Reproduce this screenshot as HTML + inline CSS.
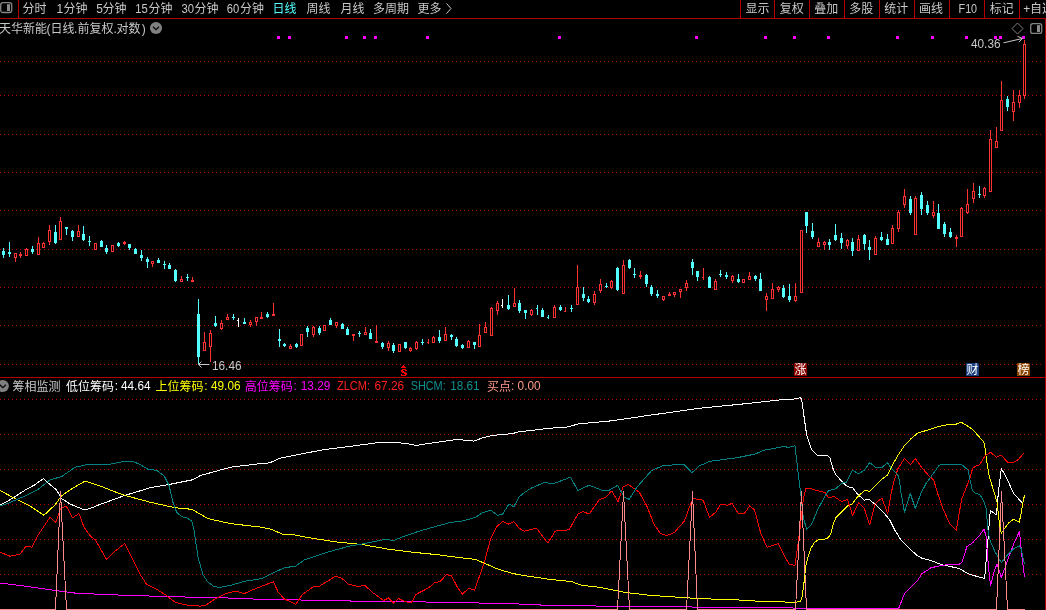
<!DOCTYPE html>
<html><head><meta charset="utf-8"><title>chart</title>
<style>
html,body{margin:0;padding:0;background:#000;overflow:hidden}
svg{display:block;transform:translateZ(0);will-change:transform}
text{font-family:"Liberation Sans","Noto Sans CJK SC",sans-serif}
</style></head><body>
<svg width="1046" height="610" viewBox="0 0 1046 610">
<rect width="1046" height="610" fill="#000"/>
<defs><pattern id="dot" x="0" y="0" width="4" height="1" patternUnits="userSpaceOnUse"><rect x="0" y="0" width="1" height="1" fill="#b80000"/></pattern></defs>
<rect x="0" y="61" width="1042" height="1" fill="url(#dot)"/>
<rect x="0" y="95" width="1042" height="1" fill="url(#dot)"/>
<rect x="0" y="134" width="1042" height="1" fill="url(#dot)"/>
<rect x="0" y="172" width="1042" height="1" fill="url(#dot)"/>
<rect x="0" y="210" width="1042" height="1" fill="url(#dot)"/>
<rect x="0" y="249" width="1042" height="1" fill="url(#dot)"/>
<rect x="0" y="287" width="1042" height="1" fill="url(#dot)"/>
<rect x="0" y="325" width="1042" height="1" fill="url(#dot)"/>
<rect x="0" y="364" width="1042" height="1" fill="url(#dot)"/>
<rect x="0" y="399" width="1042" height="1" fill="url(#dot)"/>
<rect x="0" y="434" width="1042" height="1" fill="url(#dot)"/>
<rect x="0" y="469" width="1042" height="1" fill="url(#dot)"/>
<rect x="0" y="504" width="1042" height="1" fill="url(#dot)"/>
<rect x="0" y="539" width="1042" height="1" fill="url(#dot)"/>
<rect x="0" y="574" width="1042" height="1" fill="url(#dot)"/>
<rect x="0" y="18" width="1046" height="1" fill="#b40000"/>
<rect x="0" y="377" width="1046" height="1" fill="#b40000"/>
<rect x="1045" y="18" width="1" height="592" fill="#b40000"/>
<rect x="18" y="0" width="1" height="18" fill="#b40000"/>
<rect x="740" y="0" width="1" height="18" fill="#b40000"/>
<rect x="774" y="0" width="1" height="18" fill="#b40000"/>
<rect x="809" y="0" width="1" height="18" fill="#b40000"/>
<rect x="844" y="0" width="1" height="18" fill="#b40000"/>
<rect x="879" y="0" width="1" height="18" fill="#b40000"/>
<rect x="914" y="0" width="1" height="18" fill="#b40000"/>
<rect x="949" y="0" width="1" height="18" fill="#b40000"/>
<rect x="984" y="0" width="1" height="18" fill="#b40000"/>
<rect x="1019" y="0" width="1" height="18" fill="#b40000"/>
<rect x="0.7" y="2.7" width="11" height="9.8" rx="2.2" ry="2.2" fill="none" stroke="#858585" stroke-width="1.3"/>
<rect x="7" y="4.2" width="3" height="6.8" fill="#8c8c8c"/>
<text x="22.50" y="12.90" fill="#c8c8c8" font-size="12" textLength="24" lengthAdjust="spacingAndGlyphs" text-anchor="start">分时</text>
<text x="56.50" y="12.70" fill="#c8c8c8" font-size="12" text-anchor="start">1</text>
<text x="63.50" y="12.90" fill="#c8c8c8" font-size="12" textLength="24" lengthAdjust="spacingAndGlyphs" text-anchor="start">分钟</text>
<text x="96.30" y="12.70" fill="#c8c8c8" font-size="12" text-anchor="start">5</text>
<text x="102.50" y="12.90" fill="#c8c8c8" font-size="12" textLength="24" lengthAdjust="spacingAndGlyphs" text-anchor="start">分钟</text>
<text x="135.30" y="12.70" fill="#c8c8c8" font-size="12" textLength="12.5" lengthAdjust="spacingAndGlyphs" text-anchor="start">15</text>
<text x="148.50" y="12.90" fill="#c8c8c8" font-size="12" textLength="24" lengthAdjust="spacingAndGlyphs" text-anchor="start">分钟</text>
<text x="181.50" y="12.70" fill="#c8c8c8" font-size="12" textLength="12.5" lengthAdjust="spacingAndGlyphs" text-anchor="start">30</text>
<text x="194.50" y="12.90" fill="#c8c8c8" font-size="12" textLength="24" lengthAdjust="spacingAndGlyphs" text-anchor="start">分钟</text>
<text x="226.80" y="12.70" fill="#c8c8c8" font-size="12" textLength="12.5" lengthAdjust="spacingAndGlyphs" text-anchor="start">60</text>
<text x="240.00" y="12.90" fill="#c8c8c8" font-size="12" textLength="24" lengthAdjust="spacingAndGlyphs" text-anchor="start">分钟</text>
<text x="272.50" y="12.90" fill="#54ffff" font-size="12" textLength="24" lengthAdjust="spacingAndGlyphs" text-anchor="start">日线</text>
<text x="306.50" y="12.90" fill="#c8c8c8" font-size="12" textLength="24" lengthAdjust="spacingAndGlyphs" text-anchor="start">周线</text>
<text x="340.50" y="12.90" fill="#c8c8c8" font-size="12" textLength="24" lengthAdjust="spacingAndGlyphs" text-anchor="start">月线</text>
<text x="373.00" y="12.90" fill="#c8c8c8" font-size="12" textLength="36" lengthAdjust="spacingAndGlyphs" text-anchor="start">多周期</text>
<text x="417.50" y="12.90" fill="#c8c8c8" font-size="12" textLength="24" lengthAdjust="spacingAndGlyphs" text-anchor="start">更多</text>
<path d="M446.5 3.5 L451 8.5 L446.5 13.5" fill="none" stroke="#c8c8c8" stroke-width="1"/>
<text x="745.50" y="12.90" fill="#c8c8c8" font-size="12" textLength="24" lengthAdjust="spacingAndGlyphs" text-anchor="start">显示</text>
<text x="779.80" y="12.90" fill="#c8c8c8" font-size="12" textLength="24" lengthAdjust="spacingAndGlyphs" text-anchor="start">复权</text>
<text x="814.30" y="12.90" fill="#c8c8c8" font-size="12" textLength="24" lengthAdjust="spacingAndGlyphs" text-anchor="start">叠加</text>
<text x="849.20" y="12.90" fill="#c8c8c8" font-size="12" textLength="24" lengthAdjust="spacingAndGlyphs" text-anchor="start">多股</text>
<text x="884.20" y="12.90" fill="#c8c8c8" font-size="12" textLength="24" lengthAdjust="spacingAndGlyphs" text-anchor="start">统计</text>
<text x="919.00" y="12.90" fill="#c8c8c8" font-size="12" textLength="24" lengthAdjust="spacingAndGlyphs" text-anchor="start">画线</text>
<text x="958.60" y="12.70" fill="#c8c8c8" font-size="12" textLength="18.5" lengthAdjust="spacingAndGlyphs" text-anchor="start">F10</text>
<text x="989.80" y="12.90" fill="#c8c8c8" font-size="12" textLength="24" lengthAdjust="spacingAndGlyphs" text-anchor="start">标记</text>
<text x="1023.30" y="12.70" fill="#c8c8c8" font-size="12" text-anchor="start">+</text>
<text x="1030.00" y="12.90" fill="#c8c8c8" font-size="12" textLength="24" lengthAdjust="spacingAndGlyphs" text-anchor="start">自选</text>
<text x="-1.00" y="33.10" fill="#c8c8c8" font-size="12" textLength="48" lengthAdjust="spacingAndGlyphs" text-anchor="start">天华新能</text>
<text x="46.60" y="32.90" fill="#c8c8c8" font-size="12" text-anchor="start">(</text>
<text x="50.50" y="33.10" fill="#c8c8c8" font-size="12" textLength="24" lengthAdjust="spacingAndGlyphs" text-anchor="start">日线</text>
<text x="74.00" y="32.90" fill="#c8c8c8" font-size="12" text-anchor="start">.</text>
<text x="77.50" y="33.10" fill="#c8c8c8" font-size="12" textLength="36" lengthAdjust="spacingAndGlyphs" text-anchor="start">前复权</text>
<text x="113.60" y="32.90" fill="#c8c8c8" font-size="12" text-anchor="start">.</text>
<text x="116.50" y="33.10" fill="#c8c8c8" font-size="12" textLength="24" lengthAdjust="spacingAndGlyphs" text-anchor="start">对数</text>
<text x="141.80" y="32.90" fill="#c8c8c8" font-size="12" text-anchor="start">)</text>
<circle cx="156" cy="28" r="6.1" fill="#808080"/>
<path d="M153 26.7 L156 29.6 L159 26.7" fill="none" stroke="#080808" stroke-width="1.3"/>
<path d="M1017.5 23 L1023 28.5 L1017.5 34 L1012 28.5 Z" fill="none" stroke="#808080" stroke-width="1"/>
<rect x="1030.7" y="23.6" width="11" height="9.8" rx="2.2" ry="2.2" fill="none" stroke="#858585" stroke-width="1.3"/>
<rect x="1037" y="25.2" width="3" height="6.8" fill="#8c8c8c"/>
<rect x="277" y="36" width="3" height="3" fill="#ff00ff"/>
<rect x="288" y="36" width="3" height="3" fill="#ff00ff"/>
<rect x="345" y="36" width="3" height="3" fill="#ff00ff"/>
<rect x="363" y="36" width="3" height="3" fill="#ff00ff"/>
<rect x="374" y="36" width="3" height="3" fill="#ff00ff"/>
<rect x="426" y="36" width="3" height="3" fill="#ff00ff"/>
<rect x="558" y="36" width="3" height="3" fill="#ff00ff"/>
<rect x="695" y="36" width="3" height="3" fill="#ff00ff"/>
<rect x="764" y="36" width="3" height="3" fill="#ff00ff"/>
<rect x="793" y="36" width="3" height="3" fill="#ff00ff"/>
<rect x="827" y="36" width="3" height="3" fill="#ff00ff"/>
<rect x="896" y="36" width="3" height="3" fill="#ff00ff"/>
<rect x="931" y="36" width="3" height="3" fill="#ff00ff"/>
<rect x="965" y="36" width="3" height="3" fill="#ff00ff"/>
<rect x="994" y="36" width="3" height="3" fill="#ff00ff"/>
<rect x="999" y="36" width="3" height="3" fill="#ff00ff"/>
<rect x="1022" y="36" width="3" height="3" fill="#ff00ff"/>
<g shape-rendering="crispEdges">
<rect x="3" y="248" width="1" height="10" fill="#54ffff"/>
<rect x="2" y="251" width="3" height="4" fill="#54ffff"/>
<rect x="9" y="242" width="1" height="15" fill="#54ffff"/>
<rect x="8" y="252" width="3" height="2" fill="#54ffff"/>
<rect x="15" y="258" width="1" height="4" fill="#ff3232"/>
<rect x="14" y="253" width="3" height="5" fill="#ff3232"/>
<rect x="15" y="254" width="1" height="3" fill="#000"/>
<rect x="20" y="252" width="1" height="6" fill="#ff3232"/>
<rect x="19" y="254" width="3" height="2" fill="#ff3232"/>
<rect x="26" y="248" width="1" height="1" fill="#ff3232"/>
<rect x="25" y="249" width="3" height="7" fill="#ff3232"/>
<rect x="26" y="250" width="1" height="5" fill="#000"/>
<rect x="32" y="246" width="1" height="8" fill="#54ffff"/>
<rect x="31" y="249" width="3" height="3" fill="#54ffff"/>
<rect x="38" y="237" width="1" height="6" fill="#ff3232"/>
<rect x="37" y="243" width="3" height="12" fill="#ff3232"/>
<rect x="38" y="244" width="1" height="10" fill="#000"/>
<rect x="43" y="242" width="1" height="1" fill="#ff3232"/>
<rect x="42" y="243" width="3" height="5" fill="#ff3232"/>
<rect x="43" y="244" width="1" height="3" fill="#000"/>
<rect x="49" y="225" width="1" height="5" fill="#ff3232"/>
<rect x="49" y="242" width="1" height="3" fill="#ff3232"/>
<rect x="48" y="230" width="3" height="12" fill="#ff3232"/>
<rect x="49" y="231" width="1" height="10" fill="#000"/>
<rect x="55" y="225" width="1" height="19" fill="#54ffff"/>
<rect x="54" y="232" width="3" height="11" fill="#54ffff"/>
<rect x="60" y="217" width="1" height="4" fill="#ff3232"/>
<rect x="59" y="221" width="3" height="19" fill="#ff3232"/>
<rect x="60" y="222" width="1" height="17" fill="#000"/>
<rect x="66" y="227" width="1" height="8" fill="#54ffff"/>
<rect x="65" y="227" width="3" height="2" fill="#54ffff"/>
<rect x="72" y="230" width="1" height="11" fill="#54ffff"/>
<rect x="71" y="231" width="3" height="6" fill="#54ffff"/>
<rect x="78" y="225" width="1" height="6" fill="#ff3232"/>
<rect x="77" y="231" width="3" height="6" fill="#ff3232"/>
<rect x="78" y="232" width="1" height="4" fill="#000"/>
<rect x="83" y="226" width="1" height="15" fill="#54ffff"/>
<rect x="82" y="234" width="3" height="6" fill="#54ffff"/>
<rect x="89" y="236" width="1" height="10" fill="#54ffff"/>
<rect x="88" y="241" width="3" height="1" fill="#54ffff"/>
<rect x="94" y="243" width="3" height="7" fill="#ff3232"/>
<rect x="95" y="244" width="1" height="5" fill="#000"/>
<rect x="101" y="240" width="1" height="7" fill="#54ffff"/>
<rect x="100" y="241" width="3" height="6" fill="#54ffff"/>
<rect x="106" y="245" width="1" height="9" fill="#54ffff"/>
<rect x="105" y="248" width="3" height="4" fill="#54ffff"/>
<rect x="111" y="245" width="3" height="7" fill="#ff3232"/>
<rect x="112" y="246" width="1" height="5" fill="#000"/>
<rect x="118" y="242" width="1" height="5" fill="#54ffff"/>
<rect x="117" y="243" width="3" height="3" fill="#54ffff"/>
<rect x="124" y="241" width="1" height="4" fill="#ff3232"/>
<rect x="123" y="242" width="3" height="2" fill="#ff3232"/>
<rect x="129" y="244" width="1" height="6" fill="#54ffff"/>
<rect x="128" y="244" width="3" height="4" fill="#54ffff"/>
<rect x="135" y="248" width="1" height="6" fill="#54ffff"/>
<rect x="134" y="249" width="3" height="5" fill="#54ffff"/>
<rect x="141" y="250" width="1" height="11" fill="#54ffff"/>
<rect x="140" y="255" width="3" height="3" fill="#54ffff"/>
<rect x="147" y="257" width="1" height="11" fill="#54ffff"/>
<rect x="146" y="259" width="3" height="3" fill="#54ffff"/>
<rect x="152" y="264" width="1" height="3" fill="#ff3232"/>
<rect x="151" y="261" width="3" height="3" fill="#ff3232"/>
<rect x="152" y="262" width="1" height="1" fill="#000"/>
<rect x="158" y="258" width="1" height="5" fill="#54ffff"/>
<rect x="157" y="260" width="3" height="3" fill="#54ffff"/>
<rect x="164" y="261" width="1" height="8" fill="#54ffff"/>
<rect x="163" y="264" width="3" height="1" fill="#54ffff"/>
<rect x="169" y="263" width="1" height="6" fill="#54ffff"/>
<rect x="168" y="265" width="3" height="4" fill="#54ffff"/>
<rect x="175" y="269" width="1" height="13" fill="#54ffff"/>
<rect x="174" y="270" width="3" height="11" fill="#54ffff"/>
<rect x="181" y="276" width="1" height="3" fill="#ff3232"/>
<rect x="180" y="279" width="3" height="3" fill="#ff3232"/>
<rect x="181" y="280" width="1" height="1" fill="#000"/>
<rect x="187" y="274" width="1" height="7" fill="#54ffff"/>
<rect x="186" y="277" width="3" height="1" fill="#54ffff"/>
<rect x="192" y="277" width="1" height="5" fill="#ff3232"/>
<rect x="191" y="280" width="3" height="2" fill="#ff3232"/>
<rect x="198" y="299" width="1" height="65" fill="#54ffff"/>
<rect x="197" y="314" width="3" height="43" fill="#54ffff"/>
<rect x="204" y="332" width="1" height="10" fill="#ff3232"/>
<rect x="203" y="342" width="3" height="9" fill="#ff3232"/>
<rect x="204" y="343" width="1" height="7" fill="#000"/>
<rect x="210" y="330" width="1" height="3" fill="#ff3232"/>
<rect x="210" y="347" width="1" height="15" fill="#ff3232"/>
<rect x="209" y="333" width="3" height="14" fill="#ff3232"/>
<rect x="210" y="334" width="1" height="12" fill="#000"/>
<rect x="215" y="316" width="1" height="11" fill="#54ffff"/>
<rect x="214" y="323" width="3" height="3" fill="#54ffff"/>
<rect x="221" y="320" width="1" height="3" fill="#ff3232"/>
<rect x="221" y="329" width="1" height="1" fill="#ff3232"/>
<rect x="220" y="323" width="3" height="6" fill="#ff3232"/>
<rect x="221" y="324" width="1" height="4" fill="#000"/>
<rect x="227" y="314" width="1" height="3" fill="#ff3232"/>
<rect x="226" y="317" width="3" height="3" fill="#ff3232"/>
<rect x="227" y="318" width="1" height="1" fill="#000"/>
<rect x="233" y="314" width="1" height="6" fill="#54ffff"/>
<rect x="232" y="317" width="3" height="1" fill="#54ffff"/>
<rect x="238" y="318" width="1" height="9" fill="#ffffff"/>
<rect x="237" y="320" width="1" height="1" fill="#ffffff"/>
<rect x="244" y="318" width="1" height="6" fill="#54ffff"/>
<rect x="243" y="322" width="3" height="2" fill="#54ffff"/>
<rect x="250" y="320" width="1" height="2" fill="#ff3232"/>
<rect x="250" y="325" width="1" height="2" fill="#ff3232"/>
<rect x="249" y="322" width="3" height="3" fill="#ff3232"/>
<rect x="250" y="323" width="1" height="1" fill="#000"/>
<rect x="256" y="322" width="1" height="4" fill="#ff3232"/>
<rect x="255" y="317" width="3" height="5" fill="#ff3232"/>
<rect x="256" y="318" width="1" height="3" fill="#000"/>
<rect x="261" y="312" width="1" height="7" fill="#ff3232"/>
<rect x="260" y="317" width="3" height="2" fill="#ff3232"/>
<rect x="267" y="312" width="1" height="6" fill="#54ffff"/>
<rect x="266" y="314" width="3" height="3" fill="#54ffff"/>
<rect x="273" y="303" width="1" height="13" fill="#ff3232"/>
<rect x="272" y="314" width="3" height="2" fill="#ff3232"/>
<rect x="279" y="329" width="1" height="18" fill="#54ffff"/>
<rect x="278" y="339" width="3" height="2" fill="#54ffff"/>
<rect x="284" y="343" width="1" height="4" fill="#54ffff"/>
<rect x="283" y="344" width="3" height="2" fill="#54ffff"/>
<rect x="290" y="344" width="1" height="2" fill="#ff3232"/>
<rect x="289" y="346" width="3" height="3" fill="#ff3232"/>
<rect x="290" y="347" width="1" height="1" fill="#000"/>
<rect x="296" y="343" width="1" height="5" fill="#54ffff"/>
<rect x="295" y="344" width="3" height="3" fill="#54ffff"/>
<rect x="300" y="334" width="3" height="12" fill="#ff3232"/>
<rect x="301" y="335" width="1" height="10" fill="#000"/>
<rect x="307" y="326" width="1" height="11" fill="#54ffff"/>
<rect x="306" y="328" width="3" height="4" fill="#54ffff"/>
<rect x="313" y="326" width="1" height="1" fill="#ff3232"/>
<rect x="313" y="335" width="1" height="2" fill="#ff3232"/>
<rect x="312" y="327" width="3" height="8" fill="#ff3232"/>
<rect x="313" y="328" width="1" height="6" fill="#000"/>
<rect x="319" y="326" width="1" height="9" fill="#54ffff"/>
<rect x="318" y="328" width="3" height="5" fill="#54ffff"/>
<rect x="323" y="325" width="3" height="6" fill="#ff3232"/>
<rect x="324" y="326" width="1" height="4" fill="#000"/>
<rect x="330" y="318" width="1" height="7" fill="#54ffff"/>
<rect x="329" y="320" width="3" height="5" fill="#54ffff"/>
<rect x="336" y="326" width="1" height="2" fill="#ff3232"/>
<rect x="335" y="322" width="3" height="4" fill="#ff3232"/>
<rect x="336" y="323" width="1" height="2" fill="#000"/>
<rect x="342" y="323" width="1" height="6" fill="#54ffff"/>
<rect x="341" y="324" width="3" height="5" fill="#54ffff"/>
<rect x="347" y="327" width="1" height="8" fill="#54ffff"/>
<rect x="346" y="329" width="3" height="6" fill="#54ffff"/>
<rect x="353" y="334" width="1" height="7" fill="#ff3232"/>
<rect x="352" y="334" width="3" height="2" fill="#ff3232"/>
<rect x="359" y="331" width="1" height="6" fill="#54ffff"/>
<rect x="358" y="333" width="3" height="1" fill="#54ffff"/>
<rect x="365" y="327" width="1" height="5" fill="#ff3232"/>
<rect x="364" y="332" width="3" height="3" fill="#ff3232"/>
<rect x="365" y="333" width="1" height="1" fill="#000"/>
<rect x="370" y="329" width="1" height="10" fill="#54ffff"/>
<rect x="369" y="333" width="3" height="6" fill="#54ffff"/>
<rect x="376" y="325" width="1" height="18" fill="#ff3232"/>
<rect x="375" y="341" width="3" height="2" fill="#ff3232"/>
<rect x="382" y="342" width="1" height="7" fill="#54ffff"/>
<rect x="381" y="343" width="3" height="4" fill="#54ffff"/>
<rect x="388" y="341" width="1" height="2" fill="#ff3232"/>
<rect x="388" y="348" width="1" height="3" fill="#ff3232"/>
<rect x="387" y="343" width="3" height="5" fill="#ff3232"/>
<rect x="388" y="344" width="1" height="3" fill="#000"/>
<rect x="393" y="343" width="1" height="10" fill="#54ffff"/>
<rect x="392" y="345" width="3" height="6" fill="#54ffff"/>
<rect x="398" y="344" width="3" height="8" fill="#ff3232"/>
<rect x="399" y="345" width="1" height="6" fill="#000"/>
<rect x="405" y="342" width="1" height="7" fill="#54ffff"/>
<rect x="404" y="342" width="3" height="6" fill="#54ffff"/>
<rect x="410" y="347" width="1" height="1" fill="#ff3232"/>
<rect x="410" y="351" width="1" height="1" fill="#ff3232"/>
<rect x="409" y="348" width="3" height="3" fill="#ff3232"/>
<rect x="410" y="349" width="1" height="1" fill="#000"/>
<rect x="416" y="341" width="1" height="1" fill="#ff3232"/>
<rect x="416" y="349" width="1" height="1" fill="#ff3232"/>
<rect x="415" y="342" width="3" height="7" fill="#ff3232"/>
<rect x="416" y="343" width="1" height="5" fill="#000"/>
<rect x="422" y="339" width="1" height="6" fill="#54ffff"/>
<rect x="421" y="342" width="3" height="1" fill="#54ffff"/>
<rect x="428" y="339" width="1" height="5" fill="#ff3232"/>
<rect x="427" y="342" width="1" height="1" fill="#ff3232"/>
<rect x="433" y="336" width="1" height="1" fill="#ff3232"/>
<rect x="432" y="337" width="3" height="6" fill="#ff3232"/>
<rect x="433" y="338" width="1" height="4" fill="#000"/>
<rect x="439" y="330" width="1" height="13" fill="#54ffff"/>
<rect x="438" y="337" width="3" height="4" fill="#54ffff"/>
<rect x="445" y="327" width="1" height="7" fill="#ff3232"/>
<rect x="444" y="334" width="3" height="7" fill="#ff3232"/>
<rect x="445" y="335" width="1" height="5" fill="#000"/>
<rect x="451" y="334" width="1" height="6" fill="#54ffff"/>
<rect x="450" y="335" width="3" height="2" fill="#54ffff"/>
<rect x="456" y="337" width="1" height="10" fill="#54ffff"/>
<rect x="455" y="339" width="3" height="7" fill="#54ffff"/>
<rect x="462" y="344" width="1" height="5" fill="#54ffff"/>
<rect x="461" y="345" width="3" height="3" fill="#54ffff"/>
<rect x="468" y="340" width="1" height="1" fill="#ff3232"/>
<rect x="467" y="341" width="3" height="7" fill="#ff3232"/>
<rect x="468" y="342" width="1" height="5" fill="#000"/>
<rect x="474" y="342" width="1" height="7" fill="#54ffff"/>
<rect x="473" y="342" width="3" height="3" fill="#54ffff"/>
<rect x="479" y="324" width="1" height="11" fill="#ff3232"/>
<rect x="478" y="335" width="3" height="12" fill="#ff3232"/>
<rect x="479" y="336" width="1" height="10" fill="#000"/>
<rect x="485" y="322" width="1" height="5" fill="#ff3232"/>
<rect x="484" y="327" width="3" height="6" fill="#ff3232"/>
<rect x="485" y="328" width="1" height="4" fill="#000"/>
<rect x="491" y="307" width="1" height="1" fill="#ff3232"/>
<rect x="490" y="308" width="3" height="28" fill="#ff3232"/>
<rect x="491" y="309" width="1" height="26" fill="#000"/>
<rect x="497" y="301" width="1" height="2" fill="#ff3232"/>
<rect x="497" y="311" width="1" height="4" fill="#ff3232"/>
<rect x="496" y="303" width="3" height="8" fill="#ff3232"/>
<rect x="497" y="304" width="1" height="6" fill="#000"/>
<rect x="502" y="299" width="1" height="9" fill="#ffffff"/>
<rect x="501" y="305" width="1" height="1" fill="#ffffff"/>
<rect x="508" y="295" width="1" height="15" fill="#54ffff"/>
<rect x="507" y="305" width="3" height="4" fill="#54ffff"/>
<rect x="514" y="288" width="1" height="15" fill="#ff3232"/>
<rect x="513" y="303" width="3" height="4" fill="#ff3232"/>
<rect x="514" y="304" width="1" height="2" fill="#000"/>
<rect x="519" y="300" width="1" height="13" fill="#54ffff"/>
<rect x="518" y="303" width="3" height="8" fill="#54ffff"/>
<rect x="525" y="310" width="1" height="9" fill="#54ffff"/>
<rect x="524" y="310" width="3" height="3" fill="#54ffff"/>
<rect x="531" y="309" width="1" height="1" fill="#ff3232"/>
<rect x="531" y="315" width="1" height="1" fill="#ff3232"/>
<rect x="530" y="310" width="3" height="5" fill="#ff3232"/>
<rect x="531" y="311" width="1" height="3" fill="#000"/>
<rect x="537" y="305" width="1" height="10" fill="#54ffff"/>
<rect x="536" y="308" width="1" height="1" fill="#54ffff"/>
<rect x="542" y="308" width="1" height="9" fill="#54ffff"/>
<rect x="541" y="310" width="3" height="7" fill="#54ffff"/>
<rect x="548" y="315" width="1" height="4" fill="#54ffff"/>
<rect x="547" y="317" width="1" height="1" fill="#54ffff"/>
<rect x="554" y="305" width="1" height="2" fill="#ff3232"/>
<rect x="553" y="307" width="3" height="11" fill="#ff3232"/>
<rect x="554" y="308" width="1" height="9" fill="#000"/>
<rect x="560" y="305" width="1" height="6" fill="#54ffff"/>
<rect x="559" y="307" width="3" height="3" fill="#54ffff"/>
<rect x="565" y="307" width="1" height="5" fill="#ff3232"/>
<rect x="564" y="311" width="1" height="1" fill="#ff3232"/>
<rect x="571" y="305" width="1" height="7" fill="#54ffff"/>
<rect x="570" y="308" width="3" height="1" fill="#54ffff"/>
<rect x="577" y="265" width="1" height="22" fill="#ff3232"/>
<rect x="576" y="287" width="3" height="18" fill="#ff3232"/>
<rect x="577" y="288" width="1" height="16" fill="#000"/>
<rect x="583" y="287" width="1" height="14" fill="#54ffff"/>
<rect x="582" y="294" width="3" height="4" fill="#54ffff"/>
<rect x="588" y="296" width="1" height="7" fill="#54ffff"/>
<rect x="587" y="299" width="3" height="3" fill="#54ffff"/>
<rect x="594" y="291" width="1" height="3" fill="#ff3232"/>
<rect x="594" y="303" width="1" height="2" fill="#ff3232"/>
<rect x="593" y="294" width="3" height="9" fill="#ff3232"/>
<rect x="594" y="295" width="1" height="7" fill="#000"/>
<rect x="600" y="279" width="1" height="5" fill="#ff3232"/>
<rect x="600" y="291" width="1" height="2" fill="#ff3232"/>
<rect x="599" y="284" width="3" height="7" fill="#ff3232"/>
<rect x="600" y="285" width="1" height="5" fill="#000"/>
<rect x="606" y="283" width="1" height="5" fill="#54ffff"/>
<rect x="605" y="286" width="3" height="1" fill="#54ffff"/>
<rect x="611" y="280" width="1" height="1" fill="#ff3232"/>
<rect x="611" y="288" width="1" height="1" fill="#ff3232"/>
<rect x="610" y="281" width="3" height="7" fill="#ff3232"/>
<rect x="611" y="282" width="1" height="5" fill="#000"/>
<rect x="617" y="267" width="1" height="24" fill="#54ffff"/>
<rect x="616" y="268" width="3" height="22" fill="#54ffff"/>
<rect x="623" y="260" width="1" height="5" fill="#ff3232"/>
<rect x="622" y="265" width="3" height="29" fill="#ff3232"/>
<rect x="623" y="266" width="1" height="27" fill="#000"/>
<rect x="629" y="259" width="1" height="10" fill="#54ffff"/>
<rect x="628" y="260" width="3" height="8" fill="#54ffff"/>
<rect x="634" y="268" width="1" height="10" fill="#54ffff"/>
<rect x="633" y="274" width="3" height="1" fill="#54ffff"/>
<rect x="640" y="271" width="1" height="8" fill="#ff3232"/>
<rect x="639" y="275" width="3" height="2" fill="#ff3232"/>
<rect x="646" y="274" width="1" height="13" fill="#54ffff"/>
<rect x="645" y="275" width="3" height="9" fill="#54ffff"/>
<rect x="651" y="285" width="1" height="11" fill="#54ffff"/>
<rect x="650" y="287" width="3" height="7" fill="#54ffff"/>
<rect x="657" y="290" width="1" height="8" fill="#54ffff"/>
<rect x="656" y="294" width="3" height="2" fill="#54ffff"/>
<rect x="663" y="300" width="1" height="1" fill="#ff3232"/>
<rect x="662" y="296" width="3" height="4" fill="#ff3232"/>
<rect x="663" y="297" width="1" height="2" fill="#000"/>
<rect x="669" y="292" width="1" height="4" fill="#ff3232"/>
<rect x="668" y="294" width="3" height="2" fill="#ff3232"/>
<rect x="674" y="295" width="1" height="2" fill="#ff3232"/>
<rect x="673" y="292" width="3" height="3" fill="#ff3232"/>
<rect x="674" y="293" width="1" height="1" fill="#000"/>
<rect x="680" y="292" width="1" height="6" fill="#ff3232"/>
<rect x="679" y="289" width="3" height="3" fill="#ff3232"/>
<rect x="680" y="290" width="1" height="1" fill="#000"/>
<rect x="686" y="280" width="1" height="3" fill="#ff3232"/>
<rect x="686" y="288" width="1" height="3" fill="#ff3232"/>
<rect x="685" y="283" width="3" height="5" fill="#ff3232"/>
<rect x="686" y="284" width="1" height="3" fill="#000"/>
<rect x="692" y="259" width="1" height="16" fill="#54ffff"/>
<rect x="691" y="262" width="3" height="6" fill="#54ffff"/>
<rect x="697" y="271" width="1" height="10" fill="#54ffff"/>
<rect x="696" y="271" width="3" height="6" fill="#54ffff"/>
<rect x="703" y="268" width="1" height="12" fill="#ff3232"/>
<rect x="702" y="277" width="1" height="1" fill="#ff3232"/>
<rect x="709" y="276" width="1" height="12" fill="#54ffff"/>
<rect x="708" y="277" width="3" height="11" fill="#54ffff"/>
<rect x="715" y="279" width="1" height="2" fill="#ff3232"/>
<rect x="714" y="281" width="3" height="9" fill="#ff3232"/>
<rect x="715" y="282" width="1" height="7" fill="#000"/>
<rect x="720" y="270" width="1" height="7" fill="#54ffff"/>
<rect x="719" y="274" width="3" height="1" fill="#54ffff"/>
<rect x="726" y="272" width="1" height="7" fill="#54ffff"/>
<rect x="725" y="275" width="3" height="2" fill="#54ffff"/>
<rect x="732" y="275" width="1" height="1" fill="#ff3232"/>
<rect x="732" y="281" width="1" height="2" fill="#ff3232"/>
<rect x="731" y="276" width="3" height="5" fill="#ff3232"/>
<rect x="732" y="277" width="1" height="3" fill="#000"/>
<rect x="738" y="274" width="1" height="9" fill="#54ffff"/>
<rect x="737" y="279" width="3" height="3" fill="#54ffff"/>
<rect x="742" y="279" width="3" height="4" fill="#ff3232"/>
<rect x="743" y="280" width="1" height="2" fill="#000"/>
<rect x="749" y="272" width="1" height="4" fill="#ff3232"/>
<rect x="748" y="276" width="3" height="4" fill="#ff3232"/>
<rect x="749" y="277" width="1" height="2" fill="#000"/>
<rect x="755" y="275" width="1" height="6" fill="#54ffff"/>
<rect x="754" y="276" width="3" height="3" fill="#54ffff"/>
<rect x="760" y="273" width="1" height="18" fill="#54ffff"/>
<rect x="759" y="279" width="3" height="12" fill="#54ffff"/>
<rect x="766" y="293" width="1" height="3" fill="#ff3232"/>
<rect x="766" y="300" width="1" height="11" fill="#ff3232"/>
<rect x="765" y="296" width="3" height="4" fill="#ff3232"/>
<rect x="766" y="297" width="1" height="2" fill="#000"/>
<rect x="772" y="283" width="1" height="6" fill="#ff3232"/>
<rect x="771" y="289" width="3" height="10" fill="#ff3232"/>
<rect x="772" y="290" width="1" height="8" fill="#000"/>
<rect x="778" y="286" width="1" height="1" fill="#ff3232"/>
<rect x="778" y="290" width="1" height="2" fill="#ff3232"/>
<rect x="777" y="287" width="3" height="3" fill="#ff3232"/>
<rect x="778" y="288" width="1" height="1" fill="#000"/>
<rect x="783" y="285" width="1" height="13" fill="#54ffff"/>
<rect x="782" y="288" width="3" height="9" fill="#54ffff"/>
<rect x="789" y="284" width="1" height="18" fill="#54ffff"/>
<rect x="788" y="296" width="3" height="4" fill="#54ffff"/>
<rect x="795" y="283" width="1" height="13" fill="#ff3232"/>
<rect x="795" y="301" width="1" height="1" fill="#ff3232"/>
<rect x="794" y="296" width="3" height="5" fill="#ff3232"/>
<rect x="795" y="297" width="1" height="3" fill="#000"/>
<rect x="800" y="230" width="3" height="63" fill="#ff3232"/>
<rect x="801" y="231" width="1" height="61" fill="#000"/>
<rect x="806" y="212" width="1" height="21" fill="#54ffff"/>
<rect x="805" y="212" width="3" height="14" fill="#54ffff"/>
<rect x="812" y="223" width="1" height="16" fill="#54ffff"/>
<rect x="811" y="231" width="3" height="6" fill="#54ffff"/>
<rect x="818" y="238" width="1" height="4" fill="#ff3232"/>
<rect x="817" y="242" width="3" height="5" fill="#ff3232"/>
<rect x="818" y="243" width="1" height="3" fill="#000"/>
<rect x="824" y="241" width="1" height="1" fill="#ff3232"/>
<rect x="824" y="245" width="1" height="5" fill="#ff3232"/>
<rect x="823" y="242" width="3" height="3" fill="#ff3232"/>
<rect x="824" y="243" width="1" height="1" fill="#000"/>
<rect x="829" y="239" width="1" height="11" fill="#54ffff"/>
<rect x="828" y="242" width="3" height="3" fill="#54ffff"/>
<rect x="835" y="224" width="1" height="17" fill="#54ffff"/>
<rect x="834" y="235" width="3" height="5" fill="#54ffff"/>
<rect x="841" y="233" width="1" height="16" fill="#54ffff"/>
<rect x="840" y="238" width="3" height="5" fill="#54ffff"/>
<rect x="847" y="239" width="1" height="1" fill="#ff3232"/>
<rect x="847" y="246" width="1" height="3" fill="#ff3232"/>
<rect x="846" y="240" width="3" height="6" fill="#ff3232"/>
<rect x="847" y="241" width="1" height="4" fill="#000"/>
<rect x="852" y="238" width="1" height="18" fill="#54ffff"/>
<rect x="851" y="242" width="3" height="9" fill="#54ffff"/>
<rect x="858" y="235" width="1" height="4" fill="#ff3232"/>
<rect x="857" y="239" width="3" height="12" fill="#ff3232"/>
<rect x="858" y="240" width="1" height="10" fill="#000"/>
<rect x="864" y="234" width="1" height="16" fill="#54ffff"/>
<rect x="863" y="235" width="3" height="9" fill="#54ffff"/>
<rect x="869" y="240" width="1" height="20" fill="#54ffff"/>
<rect x="868" y="247" width="3" height="3" fill="#54ffff"/>
<rect x="875" y="236" width="1" height="2" fill="#ff3232"/>
<rect x="874" y="238" width="3" height="17" fill="#ff3232"/>
<rect x="875" y="239" width="1" height="15" fill="#000"/>
<rect x="881" y="232" width="1" height="9" fill="#54ffff"/>
<rect x="880" y="237" width="3" height="3" fill="#54ffff"/>
<rect x="887" y="234" width="1" height="11" fill="#54ffff"/>
<rect x="886" y="239" width="3" height="6" fill="#54ffff"/>
<rect x="892" y="225" width="1" height="3" fill="#ff3232"/>
<rect x="891" y="228" width="3" height="16" fill="#ff3232"/>
<rect x="892" y="229" width="1" height="14" fill="#000"/>
<rect x="898" y="210" width="1" height="2" fill="#ff3232"/>
<rect x="898" y="229" width="1" height="3" fill="#ff3232"/>
<rect x="897" y="212" width="3" height="17" fill="#ff3232"/>
<rect x="898" y="213" width="1" height="15" fill="#000"/>
<rect x="904" y="189" width="1" height="7" fill="#ff3232"/>
<rect x="904" y="205" width="1" height="3" fill="#ff3232"/>
<rect x="903" y="196" width="3" height="9" fill="#ff3232"/>
<rect x="904" y="197" width="1" height="7" fill="#000"/>
<rect x="910" y="196" width="1" height="19" fill="#54ffff"/>
<rect x="909" y="199" width="3" height="14" fill="#54ffff"/>
<rect x="915" y="196" width="1" height="2" fill="#ff3232"/>
<rect x="914" y="198" width="3" height="37" fill="#ff3232"/>
<rect x="915" y="199" width="1" height="35" fill="#000"/>
<rect x="921" y="192" width="1" height="23" fill="#54ffff"/>
<rect x="920" y="195" width="3" height="14" fill="#54ffff"/>
<rect x="927" y="201" width="1" height="14" fill="#54ffff"/>
<rect x="926" y="205" width="3" height="8" fill="#54ffff"/>
<rect x="933" y="201" width="1" height="11" fill="#ff3232"/>
<rect x="933" y="216" width="1" height="2" fill="#ff3232"/>
<rect x="932" y="212" width="3" height="4" fill="#ff3232"/>
<rect x="933" y="213" width="1" height="2" fill="#000"/>
<rect x="938" y="204" width="1" height="25" fill="#54ffff"/>
<rect x="937" y="213" width="3" height="16" fill="#54ffff"/>
<rect x="944" y="222" width="1" height="15" fill="#54ffff"/>
<rect x="943" y="224" width="3" height="10" fill="#54ffff"/>
<rect x="950" y="228" width="1" height="10" fill="#54ffff"/>
<rect x="949" y="232" width="3" height="5" fill="#54ffff"/>
<rect x="956" y="235" width="1" height="12" fill="#ff3232"/>
<rect x="955" y="237" width="3" height="2" fill="#ff3232"/>
<rect x="961" y="207" width="1" height="1" fill="#ff3232"/>
<rect x="960" y="208" width="3" height="29" fill="#ff3232"/>
<rect x="961" y="209" width="1" height="27" fill="#000"/>
<rect x="967" y="189" width="1" height="15" fill="#ff3232"/>
<rect x="967" y="213" width="1" height="1" fill="#ff3232"/>
<rect x="966" y="204" width="3" height="9" fill="#ff3232"/>
<rect x="967" y="205" width="1" height="7" fill="#000"/>
<rect x="973" y="183" width="1" height="8" fill="#ff3232"/>
<rect x="973" y="199" width="1" height="4" fill="#ff3232"/>
<rect x="972" y="191" width="3" height="8" fill="#ff3232"/>
<rect x="973" y="192" width="1" height="6" fill="#000"/>
<rect x="979" y="186" width="1" height="12" fill="#54ffff"/>
<rect x="978" y="194" width="3" height="1" fill="#54ffff"/>
<rect x="984" y="187" width="1" height="1" fill="#ff3232"/>
<rect x="984" y="196" width="1" height="2" fill="#ff3232"/>
<rect x="983" y="188" width="3" height="8" fill="#ff3232"/>
<rect x="984" y="189" width="1" height="6" fill="#000"/>
<rect x="990" y="130" width="1" height="9" fill="#ff3232"/>
<rect x="989" y="139" width="3" height="53" fill="#ff3232"/>
<rect x="990" y="140" width="1" height="51" fill="#000"/>
<rect x="996" y="127" width="1" height="14" fill="#ff3232"/>
<rect x="995" y="141" width="3" height="7" fill="#ff3232"/>
<rect x="996" y="142" width="1" height="5" fill="#000"/>
<rect x="1001" y="81" width="1" height="19" fill="#ff3232"/>
<rect x="1000" y="100" width="3" height="31" fill="#ff3232"/>
<rect x="1001" y="101" width="1" height="29" fill="#000"/>
<rect x="1007" y="96" width="1" height="15" fill="#54ffff"/>
<rect x="1006" y="99" width="3" height="8" fill="#54ffff"/>
<rect x="1013" y="90" width="1" height="12" fill="#ff3232"/>
<rect x="1013" y="112" width="1" height="9" fill="#ff3232"/>
<rect x="1012" y="102" width="3" height="10" fill="#ff3232"/>
<rect x="1013" y="103" width="1" height="8" fill="#000"/>
<rect x="1019" y="90" width="1" height="5" fill="#ff3232"/>
<rect x="1019" y="103" width="1" height="5" fill="#ff3232"/>
<rect x="1018" y="95" width="3" height="8" fill="#ff3232"/>
<rect x="1019" y="96" width="1" height="6" fill="#000"/>
<rect x="1024" y="40" width="1" height="4" fill="#ff3232"/>
<rect x="1024" y="96" width="1" height="3" fill="#ff3232"/>
<rect x="1023" y="44" width="3" height="52" fill="#ff3232"/>
<rect x="1024" y="45" width="1" height="50" fill="#000"/>
</g>
<text x="971.00" y="47.80" fill="#c8c8c8" font-size="12" textLength="29.5" lengthAdjust="spacingAndGlyphs" text-anchor="start">40.36</text>
<path d="M1003.5 42.8 L1022 38.6 M1017.5 36.3 L1022.3 38.5 L1018.8 42.3" fill="none" stroke="#c8c8c8" stroke-width="1"/>
<text x="212.00" y="369.80" fill="#c8c8c8" font-size="12" textLength="29.5" lengthAdjust="spacingAndGlyphs" text-anchor="start">16.46</text>
<path d="M198.5 364.5 L209.5 364.5 M201.5 361.5 L198.5 364.5 L201.5 367.5" fill="none" stroke="#c8c8c8" stroke-width="1"/>
<rect x="403" y="365" width="1" height="1" fill="#ff0000"/>
<rect x="402" y="366" width="3" height="1" fill="#ff0000"/>
<rect x="401" y="367" width="5" height="1" fill="#ff0000"/>
<rect x="402" y="369" width="4" height="1" fill="#ff0000"/>
<rect x="401" y="370" width="2" height="1" fill="#ff0000"/>
<rect x="405" y="370" width="2" height="1" fill="#ff0000"/>
<rect x="401" y="371" width="3" height="1" fill="#ff0000"/>
<rect x="402" y="372" width="4" height="1" fill="#ff0000"/>
<rect x="404" y="373" width="3" height="1" fill="#ff0000"/>
<rect x="401" y="374" width="1" height="1" fill="#ff0000"/>
<rect x="405" y="374" width="2" height="1" fill="#ff0000"/>
<rect x="401" y="375" width="5" height="1" fill="#ff0000"/>
<path d="M794 363 h12 l1 1 v12 h-13 z" fill="#8b0000"/>
<text x="794.50" y="374.40" fill="#ffffff" font-size="12" text-anchor="start">涨</text>
<path d="M966 363 h12 l1 1 v12 h-13 z" fill="#1c3f80"/>
<text x="966.50" y="374.40" fill="#ffffff" font-size="12" text-anchor="start">财</text>
<path d="M1017 363 h12 l1 1 v12 h-13 z" fill="#8b4500"/>
<text x="1017.50" y="374.40" fill="#ffffff" font-size="12" text-anchor="start">榜</text>
<circle cx="2.8" cy="386" r="6.1" fill="#808080"/>
<path d="M-0.2 384.8 L2.9 387.7 L5.9 384.8" fill="none" stroke="#080808" stroke-width="1.3"/>
<text x="12.50" y="390.60" fill="#c8c8c8" font-size="12" textLength="48" lengthAdjust="spacingAndGlyphs" text-anchor="start">筹相监测</text>
<text x="66.00" y="390.60" fill="#ffffff" font-size="12" textLength="48" lengthAdjust="spacingAndGlyphs" text-anchor="start">低位筹码</text>
<text x="114.80" y="390.40" fill="#ffffff" font-size="12" text-anchor="start">:</text>
<text x="121.00" y="390.40" fill="#ffffff" font-size="12" textLength="29.5" lengthAdjust="spacingAndGlyphs" text-anchor="start">44.64</text>
<text x="155.50" y="390.60" fill="#ffff00" font-size="12" textLength="48" lengthAdjust="spacingAndGlyphs" text-anchor="start">上位筹码</text>
<text x="204.20" y="390.40" fill="#ffff00" font-size="12" text-anchor="start">:</text>
<text x="211.00" y="390.40" fill="#ffff00" font-size="12" textLength="29.5" lengthAdjust="spacingAndGlyphs" text-anchor="start">49.06</text>
<text x="244.80" y="390.60" fill="#ff00ff" font-size="12" textLength="48" lengthAdjust="spacingAndGlyphs" text-anchor="start">高位筹码</text>
<text x="293.60" y="390.40" fill="#ff00ff" font-size="12" text-anchor="start">:</text>
<text x="300.80" y="390.40" fill="#ff00ff" font-size="12" textLength="29.5" lengthAdjust="spacingAndGlyphs" text-anchor="start">13.29</text>
<text x="337.00" y="390.40" fill="#ff2020" font-size="12" textLength="33.0" lengthAdjust="spacingAndGlyphs" text-anchor="start">ZLCM:</text>
<text x="374.40" y="390.40" fill="#ff2020" font-size="12" textLength="29.8" lengthAdjust="spacingAndGlyphs" text-anchor="start">67.26</text>
<text x="410.70" y="390.40" fill="#109090" font-size="12" textLength="35.0" lengthAdjust="spacingAndGlyphs" text-anchor="start">SHCM:</text>
<text x="450.30" y="390.40" fill="#109090" font-size="12" textLength="29.3" lengthAdjust="spacingAndGlyphs" text-anchor="start">18.61</text>
<text x="487.00" y="390.60" fill="#ff9a8a" font-size="12" textLength="24" lengthAdjust="spacingAndGlyphs" text-anchor="start">买点</text>
<text x="511.00" y="390.40" fill="#ff9a8a" font-size="12" text-anchor="start">:</text>
<text x="517.60" y="390.40" fill="#ff9a8a" font-size="12" textLength="23.0" lengthAdjust="spacingAndGlyphs" text-anchor="start">0.00</text>
<g shape-rendering="crispEdges" stroke-linejoin="round">
<polyline fill="none" stroke="#ffffff" stroke-width="1" points="0.0,505.3 10.0,499.8 25.0,490.2 35.0,484.7 43.4,478.5 50.1,484.7 56.4,489.7 61.4,498.5 70.2,504.0 84.0,509.8 90.2,508.5 100.3,504.3 125.3,495.3 150.4,487.7 168.0,484.7 193.0,479.7 200.5,475.5 230.6,467.2 262.0,463.4 269.5,462.9 279.5,458.4 299.6,454.2 324.7,449.6 349.7,446.4 379.8,442.4 394.8,442.4 407.4,443.6 416.1,445.4 432.4,442.9 457.5,439.4 473.8,441.1 482.6,437.9 492.6,435.4 512.6,433.6 520.1,431.3 524.0,431.3 549.1,428.3 566.6,427.1 579.1,423.8 611.7,420.8 649.3,415.3 699.4,408.3 749.6,403.3 784.0,399.5 792.4,399.2 797.4,398.4 800.7,397.5 802.1,402.0 804.1,417.1 806.6,434.7 811.6,449.7 817.5,455.2 827.5,455.6 830.0,458.1 833.4,469.8 835.9,474.8 842.6,482.3 847.6,486.8 852.6,487.6 857.6,494.2 864.3,500.1 869.3,499.6 875.2,504.3 884.4,513.5 889.4,519.3 894.4,529.4 901.1,540.2 911.2,550.3 917.8,556.0 922.0,558.2 931.2,560.6 941.3,564.6 948.8,566.2 959.0,568.4 969.4,574.4 984.1,578.3 985.4,571.9 986.6,553.5 988.4,535.0 989.0,526.5 990.3,510.5 996.4,514.8 998.3,493.3 999.5,483.5 1001.3,468.6 1006.3,477.3 1013.6,493.3 1023.5,504.4"/>
<polyline fill="none" stroke="#ffff00" stroke-width="1" points="0.0,490.5 15.0,498.5 30.0,506.0 43.9,515.3 55.1,504.8 61.4,496.0 70.2,489.7 85.2,481.0 100.3,486.0 112.8,491.0 125.3,495.5 150.4,502.3 175.4,507.8 191.7,509.3 208.0,518.6 230.6,523.6 262.0,527.3 272.0,529.5 282.0,534.0 292.0,534.4 312.1,538.3 337.2,542.0 362.3,544.6 387.3,549.0 412.4,552.2 437.4,554.7 462.5,558.0 475.0,559.3 485.1,563.5 497.6,569.0 512.6,573.5 524.0,575.5 549.1,579.3 571.6,581.6 581.6,585.3 599.2,587.3 624.3,592.3 649.3,595.3 699.4,598.6 737.0,599.9 764.6,601.6 784.0,601.8 787.3,602.4 795.7,602.4 800.7,601.1 802.1,596.9 804.1,581.8 805.7,567.0 807.4,558.6 810.8,548.6 814.1,542.7 818.3,539.9 824.2,539.4 828.3,537.7 830.8,533.5 833.4,523.5 835.9,517.6 841.7,511.8 848.4,505.1 851.8,504.3 857.6,496.7 865.1,490.0 869.3,491.4 875.2,485.9 881.0,480.0 887.7,474.8 891.1,467.3 897.8,455.6 904.5,445.5 911.2,438.5 917.8,433.0 926.2,430.5 937.9,426.6 948.0,424.6 956.3,424.1 961.0,422.1 965.6,424.8 972.6,429.3 976.8,434.2 983.8,441.9 985.1,448.2 986.5,460.0 989.3,476.8 990.3,479.8 994.0,492.1 997.0,501.9 998.3,514.2 999.5,524.0 1001.3,533.3 1003.8,529.6 1008.7,522.8 1013.6,519.1 1019.2,522.2 1021.0,514.2 1022.9,503.1 1024.5,495.1"/>
<polyline fill="none" stroke="#ff00ff" stroke-width="1" points="0.0,583.1 25.0,586.1 50.1,589.8 75.2,593.1 100.3,594.3 125.3,595.3 175.4,596.8 225.6,597.9 262.0,599.4 287.0,599.9 349.7,600.4 351.0,601.6 412.4,601.9 475.0,602.4 480.0,603.1 500.0,603.6 524.0,604.1 539.0,604.4 541.5,605.4 649.3,606.6 786.0,607.9 792.4,607.4 793.2,608.6 898.6,608.6 904.5,593.5 912.8,585.2 917.8,580.2 922.0,573.5 927.9,570.0 931.2,567.6 936.2,566.7 941.3,565.4 947.2,564.8 958.3,564.8 962.0,562.1 966.9,546.7 973.0,542.4 979.8,535.0 984.1,529.0 986.0,536.3 987.2,549.8 988.4,565.8 990.5,586.0 994.0,571.9 997.0,563.9 1001.3,577.4 1005.0,567.6 1010.0,553.5 1014.9,541.2 1019.5,531.4 1021.6,553.5 1024.5,577.4"/>
<polyline fill="none" stroke="#ff0000" stroke-width="1" points="0.0,552.2 10.0,556.2 20.0,554.2 26.3,546.0 32.1,547.2 37.6,535.9 50.1,517.1 55.6,522.7 60.9,507.9 66.4,506.4 72.7,517.9 78.9,513.4 84.0,527.2 90.2,535.9 95.2,539.7 106.5,559.3 115.3,551.0 124.6,543.5 132.8,559.8 140.4,574.8 146.6,584.3 155.4,588.6 165.4,594.8 175.4,602.4 185.5,604.9 200.5,606.1 205.5,605.4 215.5,598.6 225.6,593.6 235.6,591.1 244.4,593.6 250.6,590.6 262.0,586.1 273.3,581.8 278.3,592.3 284.6,599.1 295.8,604.4 302.1,594.8 313.4,586.6 319.6,586.1 335.9,576.0 342.2,578.6 348.5,584.3 358.5,586.6 364.8,585.3 372.3,592.3 383.6,600.4 388.6,597.9 393.6,603.1 398.6,598.6 404.9,601.6 411.1,603.1 416.1,594.3 428.7,587.8 434.9,582.3 439.9,581.8 446.2,574.8 451.2,575.3 457.5,587.3 462.5,594.1 468.8,588.1 474.5,590.3 480.0,574.8 485.1,559.8 490.6,538.5 496.3,527.2 502.6,521.4 508.9,524.2 513.9,521.7 518.9,527.9 524.0,531.2 536.5,528.1 547.8,543.1 555.3,531.1 569.1,529.8 577.9,514.1 582.9,511.5 589.2,514.1 599.2,499.8 605.5,497.3 611.7,491.0 618.0,501.5 623.0,487.2 628.0,484.2 639.3,492.3 646.8,506.0 654.3,524.8 660.6,533.6 666.9,535.6 674.4,532.4 684.4,521.1 689.4,507.3 693.2,498.5 703.2,500.3 709.5,517.3 715.7,512.3 720.7,504.0 727.0,505.3 732.0,503.5 738.3,513.6 744.6,513.1 749.6,506.0 754.6,510.0 760.8,533.5 767.1,547.2 778.4,543.5 784.0,555.2 789.0,564.0 794.9,565.5 797.4,548.0 799.9,530.2 803.2,500.1 805.7,488.8 809.1,488.0 817.5,490.7 825.0,492.5 828.3,497.6 834.2,496.7 841.7,501.7 847.6,499.2 852.6,515.5 858.5,502.6 864.3,508.4 869.7,524.8 875.2,503.4 881.9,498.1 887.7,513.5 891.1,493.7 893.6,482.3 897.8,469.0 904.5,458.4 910.7,464.4 915.3,458.4 922.9,469.0 929.6,476.5 933.7,480.0 937.9,494.2 942.9,508.4 949.6,523.5 956.3,530.2 958.9,514.2 962.0,498.2 966.9,485.9 969.8,478.2 972.6,468.4 975.4,466.3 979.6,464.9 985.1,455.8 990.5,452.3 996.3,457.2 1001.2,455.1 1007.5,462.1 1013.1,462.5 1018.6,459.3 1024.0,453.0"/>
<polyline fill="none" stroke="#008080" stroke-width="1" points="0.0,506.0 7.5,503.5 25.0,496.0 37.6,489.7 50.1,479.7 61.4,476.7 75.2,467.2 86.5,464.7 104.0,464.7 110.3,464.2 125.3,461.2 132.8,461.4 140.4,464.7 147.9,469.2 156.6,470.4 164.2,476.0 169.2,486.0 172.9,502.3 176.7,512.3 181.7,516.8 186.7,517.8 191.7,521.0 194.2,531.0 198.0,557.3 203.0,574.8 208.0,582.3 214.3,586.8 220.6,587.3 230.6,585.3 245.6,581.1 262.0,578.6 273.3,572.8 284.6,567.8 295.8,566.0 304.6,559.8 324.7,553.0 349.7,546.0 362.3,544.0 387.3,539.0 392.3,541.0 402.4,537.0 417.4,531.7 437.4,526.0 450.0,522.5 462.5,521.0 475.0,517.5 482.6,512.8 490.6,510.2 497.6,515.4 502.6,514.2 508.9,504.0 513.9,506.7 518.9,497.2 524.0,492.8 531.5,488.0 544.0,482.7 554.0,483.5 570.4,477.2 577.9,490.5 589.2,485.2 601.7,490.2 609.2,490.2 617.5,485.5 624.3,497.3 629.3,499.3 636.8,487.2 651.8,470.4 664.3,465.2 684.4,464.7 691.9,472.7 699.4,465.9 709.5,461.4 737.0,457.7 754.6,454.2 764.6,450.1 774.6,448.4 784.0,446.4 787.3,447.2 791.5,446.9 794.9,445.5 796.5,458.9 799.1,481.0 800.7,493.4 803.2,516.8 806.6,529.4 811.6,524.3 817.5,510.1 824.2,497.6 828.3,490.9 835.9,488.7 841.7,483.2 846.7,482.0 852.6,470.1 858.5,474.0 864.3,470.3 869.7,462.6 876.0,467.6 881.9,467.6 887.4,462.6 891.1,468.1 897.8,474.8 899.4,480.0 901.1,493.4 904.5,512.1 910.3,493.4 915.3,508.4 921.2,492.8 926.2,483.2 931.2,476.5 935.4,470.6 938.8,465.6 941.3,464.5 961.4,464.2 968.1,470.2 970.0,479.8 972.4,490.2 975.5,493.3 979.8,494.5 983.5,500.7 986.0,508.1 987.2,520.4 988.4,534.0 990.3,541.2 995.2,552.2 1001.3,562.7 1008.7,553.5 1014.9,547.9 1019.2,545.8 1021.0,548.5 1024.5,564.5"/>
<polyline fill="none" stroke="#ff8a8a" stroke-width="1" points="0.0,609.5 55.5,609.5 60.5,492.0 66.5,609.5 617.5,609.5 623.5,492.0 629.5,609.5 686.5,609.5 692.5,492.0 697.5,609.5 795.5,609.5 801.5,492.0 806.5,609.5 996.5,609.5 1001.5,492.0 1007.5,609.5 1024.5,609.5"/>
</g>
</svg>
</body></html>
